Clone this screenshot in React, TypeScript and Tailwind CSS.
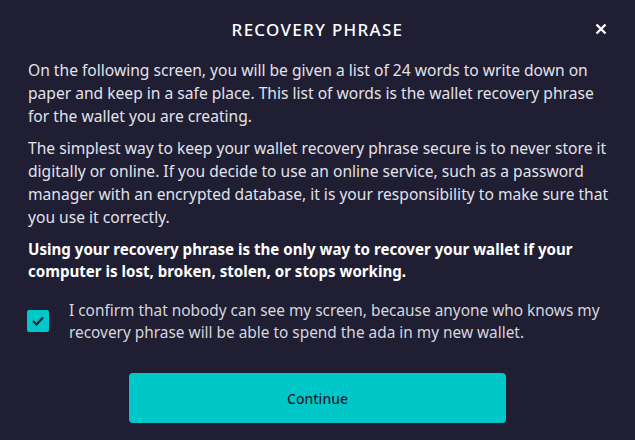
import { useState } from "react";

export default function App() {
  const [checked, setChecked] = useState(true);

  return (
    <div
      className="w-[635px] h-[440px] bg-[#1f1e33] text-[#e2e2ea] overflow-hidden"
      style={{ fontFamily: '"Noto Sans", sans-serif' }}
    >
      <div className="relative pt-[17px] pb-[16px]">
        <h1 className="text-center text-[17px] leading-[26px] tracking-[0.075em] text-white font-medium">
          RECOVERY PHRASE
        </h1>
        <button className="absolute right-[28px] top-[23px] text-white">
          <svg width="12" height="12" viewBox="0 0 12 12">
            <path d="M1.5 1.5L10.5 10.5M10.5 1.5L1.5 10.5" stroke="currentColor" strokeWidth="2.4" />
          </svg>
        </button>
      </div>

      <div className="pl-[28px] pr-[20px] text-[15.6px] leading-[23px] flex flex-col gap-[9px]">
        <p className="pr-[8px]">
          On the following screen, you will be given a list of 24 words to write down on
          paper and keep in a safe place. This list of words is the wallet recovery phrase
          for the wallet you are creating.
        </p>
        <p>
          The simplest way to keep your wallet recovery phrase secure is to never store it
          digitally or online. If you decide to use an online service, such as a password
          manager with an encrypted database, it is your responsibility to make sure that
          you use it correctly.
        </p>
        <p className="font-bold text-white text-[15.1px] leading-[22px] pr-[8px]">
          Using your recovery phrase is the only way to recover your wallet if your
          computer is lost, broken, stolen, or stops working.
        </p>
      </div>

      <label className="flex items-start gap-[20px] px-[27px] mt-[18px] cursor-pointer">
        <button
          onClick={() => setChecked(!checked)}
          className="mt-[10px] w-[22px] h-[22px] shrink-0 rounded-[2px] bg-[#00c8c8] flex items-center justify-center"
        >
          {checked && (
            <svg width="12" height="10" viewBox="0 0 12 10">
              <path d="M1 5L4.5 8.5L11 1.5" fill="none" stroke="#1f1e33" strokeWidth="2.2" />
            </svg>
          )}
        </button>
        <span className="text-[15.4px] leading-[22px] text-[#d6d6de]">
          I confirm that nobody can see my screen, because anyone who knows my
          recovery phrase will be able to spend the ada in my new wallet.
        </span>
      </label>

      <div className="flex justify-center mt-[29px]">
        <button className="w-[377px] h-[50px] rounded-[4px] bg-[#00c8c8] text-[#1f1e33] text-[14px] font-medium">
          Continue
        </button>
      </div>
    </div>
  );
}
